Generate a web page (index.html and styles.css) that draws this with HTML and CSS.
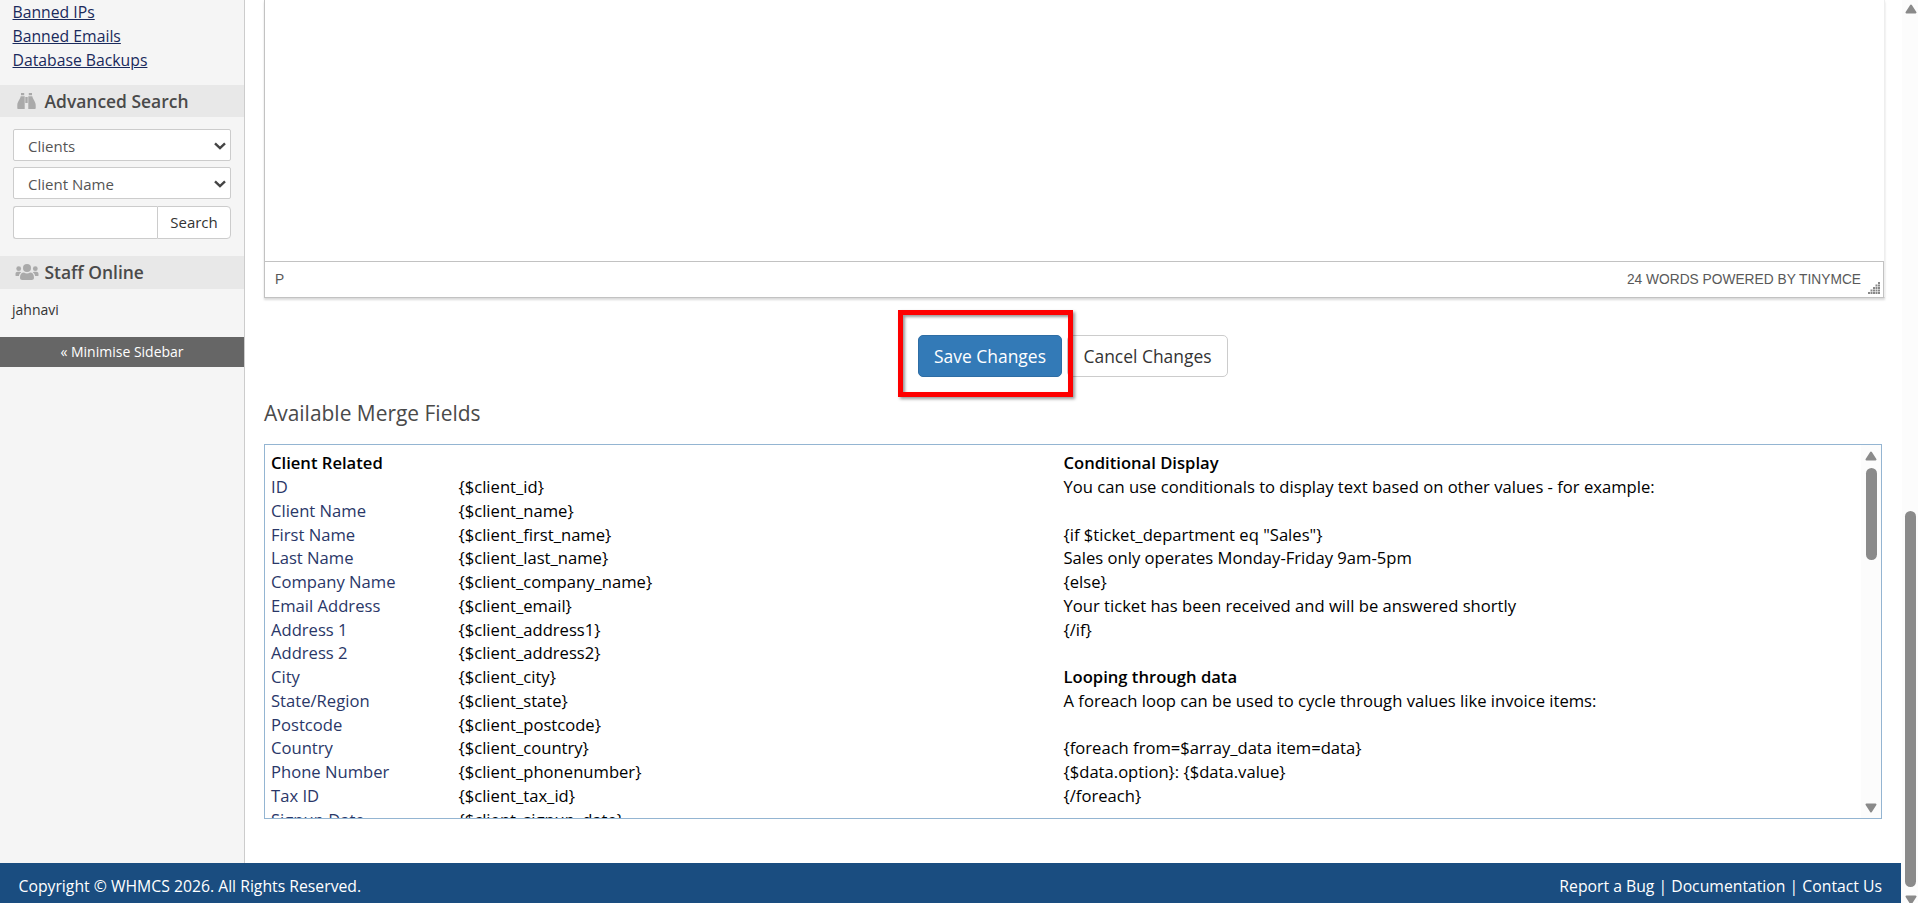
FILE: index.html
```html
<!DOCTYPE html>
<html>

<head>
    <title>WHMCS - Email Templates</title>
    <meta charset="UTF-8">
    <meta name="viewport" content="width=device-width, initial-scale=1.0">
    <link rel="stylesheet" href="styles.css">
</head>

<body>
    <div class="page">
        <div class="main">
            <div class="sidebar">
                <ul class="menu">
                    <li><a href="#">Banned IPs</a></li>
                    <li><a href="#">Banned Emails</a></li>
                    <li><a href="#">Database Backups</a></li>
                </ul>
                <div class="header">
                    <svg class="icon" width="24" height="18" viewBox="0 0 24 18">
                        <path d="M6 1h3.200v2.200H6zM13.800 1H17v2.200h-3.200zM5.700 4.200h4v12.800H3.300c-.6 0-1-.4-1-1v-3c.2-3.600 2.400-4.800 3.400-8.800zM10.300 5h2.400v6h-2.400zM13.300 4.200h4c1 4 3.200 5.200 3.400 8.800v3c0 .6-.4 1-1 1h-6.400z" />
                    </svg>
                    Advanced Search
                </div>
                <form class="search">
                    <div class="select">Clients
                        <svg width="12" height="8" viewBox="0 0 12 8"><path d="M1 1.300l5 4.700 5-4.700" /></svg>
                    </div>
                    <div class="select">Client Name
                        <svg width="12" height="8" viewBox="0 0 12 8"><path d="M1 1.300l5 4.700 5-4.700" /></svg>
                    </div>
                    <div class="input-group">
                        <input type="text" name="q">
                        <button type="button">Search</button>
                    </div>
                </form>
                <div class="header staff-header">
                    <svg class="icon" width="24" height="18" viewBox="0 0 24 18">
                        <circle cx="12" cy="5" r="4" />
                        <circle cx="3.700" cy="5.700" r="2.400" />
                        <circle cx="20.300" cy="5.700" r="2.400" />
                        <path d="M5 14.800c0-3.600 1.500-5.300 4-5.300 1.800 1.200 4.200 1.200 6 0 2.500 0 4 1.700 4 5.300 0 1.500-1 2.200-2.300 2.200H7.300C6 17 5 16.300 5 14.800zM.5 12.500V11c0-1.600.8-2.300 2.300-2.300h2c.6 0 1.100.200 1.500.6C5 10.200 4.200 11.300 3.900 13H1.500c-.7 0-1-.1-1-.5zM23.500 12.500V11c0-1.600-.8-2.300-2.300-2.300h-2c-.6 0-1.100.200-1.500.6 1.300.9 2.100 2 2.400 3.700h2.400c.7 0 1-.1 1-.5z" />
                    </svg>
                    Staff Online
                </div>
                <div class="staff">jahnavi</div>
                <a class="minimise" href="#">&laquo; Minimise Sidebar</a>
            </div>

            <div class="content">
                <div class="editor">
                    <div class="editor-area"></div>
                    <div class="statusbar">
                        <span>P</span>
                        <span class="words">24 WORDS POWERED BY TINYMCE</span>
                        <svg class="resize" width="12" height="12" viewBox="0 0 12 12">
                            <path d="M10 0h2v2h-2zM7.500 2.500h2v2h-2zM10 2.500h2v2h-2zM5 5h2v2H5zM7.500 5h2v2h-2zM10 5h2v2h-2zM2.500 7.500h2v2h-2zM5 7.500h2v2H5zM7.500 7.500h2v2h-2zM10 7.500h2v2h-2zM0 10h2v2H0zM2.500 10h2v2h-2zM5 10h2v2H5zM7.500 10h2v2h-2zM10 10h2v2h-2z" />
                        </svg>
                    </div>
                </div>

                <div class="buttons">
                    <div class="highlight">
                        <button class="btn btn-primary" type="button">Save Changes</button>
                    </div>
                    <button class="btn btn-default" type="button">Cancel Changes</button>
                </div>

                <h2>Available Merge Fields</h2>
                <div class="merge-box">
                    <div class="merge-fields">
                        <b>Client Related</b><span></span>
                        <a href="#">ID</a><span>{$client_id}</span>
                        <a href="#">Client Name</a><span>{$client_name}</span>
                        <a href="#">First Name</a><span>{$client_first_name}</span>
                        <a href="#">Last Name</a><span>{$client_last_name}</span>
                        <a href="#">Company Name</a><span>{$client_company_name}</span>
                        <a href="#">Email Address</a><span>{$client_email}</span>
                        <a href="#">Address 1</a><span>{$client_address1}</span>
                        <a href="#">Address 2</a><span>{$client_address2}</span>
                        <a href="#">City</a><span>{$client_city}</span>
                        <a href="#">State/Region</a><span>{$client_state}</span>
                        <a href="#">Postcode</a><span>{$client_postcode}</span>
                        <a href="#">Country</a><span>{$client_country}</span>
                        <a href="#">Phone Number</a><span>{$client_phonenumber}</span>
                        <a href="#">Tax ID</a><span>{$client_tax_id}</span>
                        <a href="#">Signup Date</a><span>{$client_signup_date}</span>
                    </div>
                    <div class="merge-help">
                        <b>Conditional Display</b><br>
                        You can use conditionals to display text based on other values - for example:<br>
                        <br>
                        {if $ticket_department eq "Sales"}<br>
                        Sales only operates Monday-Friday 9am-5pm<br>
                        {else}<br>
                        Your ticket has been received and will be answered shortly<br>
                        {/if}<br>
                        <br>
                        <b>Looping through data</b><br>
                        A foreach loop can be used to cycle through values like invoice items:<br>
                        <br>
                        {foreach from=$array_data item=data}<br>
                        {$data.option}: {$data.value}<br>
                        {/foreach}
                    </div>
                    <div class="scrollbar">
                        <svg width="12" height="10" viewBox="0 0 12 10"><path d="M6 1.500L10.500 8.500h-9z" /></svg>
                        <div class="thumb"></div>
                        <svg class="down" width="12" height="10" viewBox="0 0 12 10"><path d="M6 8.500L10.500 1.500h-9z" /></svg>
                    </div>
                </div>
            </div>
        </div>

        <div class="footer">
            <div>Copyright &copy; WHMCS 2026. All Rights Reserved.</div>
            <div><a href="#">Report a Bug</a> | <a href="#">Documentation</a> | <a href="#">Contact Us</a></div>
        </div>
    </div>

    <div class="scrollbar page-scrollbar">
        <svg width="12" height="10" viewBox="0 0 12 10"><path d="M6 1.500L10.500 8.500h-9z" /></svg>
        <div class="thumb"></div>
        <svg class="down" width="12" height="10" viewBox="0 0 12 10"><path d="M6 8.500L10.500 1.500h-9z" /></svg>
    </div>
</body>

</html>
```
FILE: styles.css
```css
* {
    box-sizing: border-box;
}

body {
    display: flex;
    height: 903px;
    margin: 0;
    overflow: hidden;
    font-family: "Open Sans", "Noto Sans", sans-serif;
    font-size: 16.62px;
    color: #000;
    background-color: #fff;
}

a {
    color: #202f60;
    text-decoration: none;
}

button,
input {
    font-family: inherit;
}

.page {
    display: flex;
    flex-direction: column;
    flex: 1;
}

.main {
    display: flex;
    height: 863px;
}

/* Sidebar */
.sidebar {
    width: 245px;
    border-right: 1px solid #ccc;
    background-color: #f5f5f5;
    color: #333;
}

.menu {
    height: 85px;
    margin: 0;
    padding: 0 12.5px;
    list-style: none;
    font-size: 15.75px;
    line-height: 24px;
}

.menu a {
    color: #1a2a5c;
    text-decoration: underline;
}

.header {
    display: flex;
    align-items: center;
    gap: 5.5px;
    height: 32px;
    padding-left: 15px;
    background-color: #e8e8e8;
    color: #4a4a4a;
    font-size: 17.45px;
    font-weight: 600;
}

.icon {
    fill: #aaa;
}

.search {
    display: flex;
    flex-direction: column;
    gap: 6px;
    height: 139px;
    padding: 12px 13px 0;
    font-size: 15px;
}

.select {
    display: flex;
    justify-content: space-between;
    align-items: center;
    height: 32px;
    padding: 1px 4px 0 14px;
    border: 1px solid #ccc;
    border-radius: 2px;
    background-color: #fff;
    color: #555;
}

.select svg {
    fill: none;
    stroke: #444;
    stroke-width: 2.4;
}

.input-group {
    display: flex;
    height: 33px;
    margin-top: 1px;
}

.input-group input {
    width: 144px;
    border: 1px solid #ccc;
    border-right: none;
    border-radius: 3px 0 0 3px;
    background-color: #fff;
}

.input-group button {
    flex: 1;
    padding: 0 0 2px;
    border: 1px solid #ccc;
    border-radius: 0 4px 4px 0;
    background-color: #fff;
    color: #333;
    font-size: 15px;
}

.staff-header {
    height: 33px;
    padding-bottom: 1px;
}

.staff {
    height: 48px;
    padding-left: 12px;
    font-size: 14px;
    line-height: 42px;
}

.minimise {
    display: block;
    height: 30px;
    background-color: #666;
    color: #fff;
    font-size: 14px;
    line-height: 29px;
    text-align: center;
}

/* Content */
.content {
    flex: 1;
    padding: 0 17px 0 19px;
}

.editor {
    height: 298px;
    border: 1px solid #c2c2c2;
    border-top: none;
    border-right-color: #eee;
    box-shadow: 0 2px 2px rgba(0, 0, 0, 0.15);
}

.editor-area {
    height: 261px;
}

.statusbar {
    display: flex;
    height: 36px;
    border-top: 1px solid #c2c2c2;
    border-right: 1px solid #c2c2c2;
    padding: 0 3px 0 10px;
    color: #595959;
    font-family: "Liberation Sans", Arial, sans-serif;
    font-size: 13.75px;
    line-height: 35px;
}

.words {
    margin-left: auto;
}

.resize {
    align-self: flex-end;
    margin: 0 0 3px 7px;
    fill: #888;
}

.buttons {
    display: flex;
    align-items: center;
    height: 87px;
    margin: 12px 0 0 634px;
}

.highlight {
    z-index: 1;
    width: 175px;
    height: 87px;
    padding: 20px 0 0 15px;
    border: 5px solid #fe0000;
    box-shadow: 2px 2px 3px rgba(0, 0, 0, 0.4), inset 2px 2px 3px rgba(0, 0, 0, 0.4);
}

.btn {
    display: block;
    height: 42px;
    padding: 0;
    border: 1px solid #ccc;
    border-radius: 5px;
    font-size: 17.45px;
}

.btn-primary {
    width: 144px;
    border-color: #2e6da4;
    background-color: #337ab7;
    color: #fff;
}

.btn-default {
    width: 161px;
    margin: 5px 0 0 -6px;
    background-color: #fff;
    color: #333;
}

h2 {
    height: 47px;
    margin: 0;
    color: #4a4a4a;
    font-size: 20.95px;
    font-weight: 400;
    line-height: 32px;
}

.merge-box {
    display: flex;
    width: 1618px;
    height: 375px;
    overflow: hidden;
    border: 1px solid #94b5d2;
    line-height: 23.75px;
}

.merge-box b {
    font-weight: 600;
}

.merge-fields {
    display: grid;
    grid-template-columns: 187.5px 1fr;
    grid-auto-rows: 23.75px;
    width: 792px;
    padding: 6.4px 0 0 6px;
}

.merge-fields a {
    color: #2a3768;
}

.merge-help {
    flex: 1;
    padding: 6.4px 0 0 6.5px;
}

/* Scrollbars */
.scrollbar {
    display: flex;
    flex-direction: column;
    align-items: center;
    width: 20px;
    padding: 6px 0 5px;
    background-color: #fcfcfc;
}

.scrollbar svg {
    flex: none;
    fill: #8a8a8a;
    stroke: #8a8a8a;
    stroke-width: 2;
    stroke-linejoin: round;
}

.scrollbar .thumb {
    flex: none;
    width: 11px;
    height: 92px;
    margin-top: 7px;
    border-radius: 6px;
    background-color: #8a8a8a;
}

.scrollbar .down {
    margin-top: auto;
}

.page-scrollbar {
    width: 16px;
    padding: 4px 0 0 1px;
}

.page-scrollbar .thumb {
    height: 376px;
    margin-top: 497px;
}

.page-scrollbar .down {
    margin: 8px 0 0;
}

.footer {
    display: flex;
    justify-content: space-between;
    height: 40px;
    padding: 0 19px 0 18.5px;
    border-right: 1px solid #fcfcfc;
    background-color: #1a4d80;
    color: #fff;
    font-size: 15.75px;
    line-height: 46px;
}

.footer a {
    color: #fff;
}
```
